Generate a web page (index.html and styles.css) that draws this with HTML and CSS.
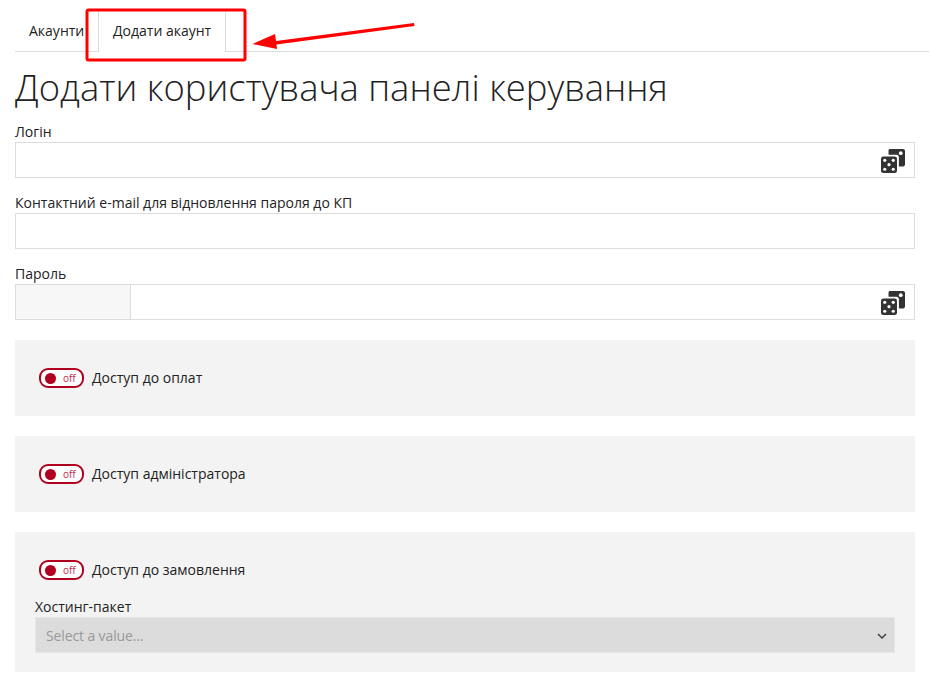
FILE: index.html
```html
<!DOCTYPE html>
<html lang="uk">
<head>
<meta charset="utf-8">
<title>Додати акаунт</title>
<link rel="stylesheet" href="styles.css">
</head>
<body>
<nav class="tabs">
  <a class="tab">Акаунти</a>
  <a class="tab tab-active">Додати акаунт</a>
</nav>
<main class="page">
  <h1 class="title">Додати користувача панелі керування</h1>
  <div class="field">
    <label class="label">Логін</label>
    <div class="input">
      <svg class="dice" viewBox="0 0 25.500 25.500"><use href="#dice"/></svg>
    </div>
  </div>
  <div class="field">
    <label class="label">Контактний e-mail для відновлення пароля до КП</label>
    <div class="input"></div>
  </div>
  <div class="field field-last">
    <label class="label">Пароль</label>
    <div class="input">
      <div class="addon"></div>
      <svg class="dice" viewBox="0 0 25.500 25.500"><use href="#dice"/></svg>
    </div>
  </div>
  <section class="panel">
    <div class="switch-row"><span class="switch"><span class="knob"></span><span class="off">off</span></span><span>Доступ до оплат</span></div>
  </section>
  <section class="panel">
    <div class="switch-row"><span class="switch"><span class="knob"></span><span class="off">off</span></span><span>Доступ адміністратора</span></div>
  </section>
  <section class="panel panel-tall">
    <div class="switch-row"><span class="switch"><span class="knob"></span><span class="off">off</span></span><span>Доступ до замовлення</span></div>
    <label class="label label-sub">Хостинг-пакет</label>
    <div class="select">
      <span class="placeholder">Select a value...</span>
      <svg class="chev" viewBox="0 0 10 6"><path d="M1 1l4 4 4-4" fill="none" stroke="#444" stroke-width="1.5"/></svg>
    </div>
  </section>
</main>
<svg class="annot" viewBox="0 0 929 691">
  <rect x="87" y="10" width="158" height="50" rx="1.5" fill="none" stroke="#f00" stroke-width="3"/>
  <path d="M252.500 44L275 34L276 41L414 23L414.500 26L276.500 44.500L277 49Z" fill="#f00"/>
</svg>
<svg class="defs" width="0" height="0">
  <defs>
    <g id="dice">
      <path fill="#333" d="M8 1.500C8 .7 8.700 0 9.500 0H23.500C24.600 0 25.500 .9 25.500 2V16.500C25.500 17.600 24.600 18.500 23.500 18.500H19V8.500C19 7.100 17.900 6 16.500 6H8Z"/>
      <circle cx="21" cy="4.500" r="2" fill="#fff"/>
      <rect x="0" y="8" width="17" height="17.500" rx="2.500" fill="#333"/>
      <g fill="#fff"><circle cx="4" cy="12" r="1.700"/><circle cx="13" cy="12" r="1.700"/><circle cx="8.500" cy="16.700" r="1.700"/><circle cx="4" cy="21.500" r="1.700"/><circle cx="13" cy="21.500" r="1.700"/></g>
    </g>
  </defs>
</svg>
</body>
</html>
```
FILE: styles.css
```css
* { box-sizing: border-box; }
html, body { margin: 0; padding: 0; }
body {
  width: 929px;
  height: 691px;
  overflow: hidden;
  background: #fff;
  color: #222;
  font-family: "Open Sans", "Liberation Sans", sans-serif;
  font-size: 14px;
  line-height: 20px;
}
.tabs {
  display: flex;
  height: 52px;
  margin-left: 15px;
  padding-top: 10px;
  border-bottom: 1px solid #ddd;
}
.tab {
  display: block;
  padding: 10px 14px;
  height: 42px;
  border: 1px solid transparent;
  border-bottom: 0;
  white-space: nowrap;
}
.tab:first-child { width: 83px; padding-left: 13px; padding-right: 0; }
.tab-active {
  width: 128px;
  background: #fff;
  border-color: #ddd;
}
.page { padding: 0 14px 0 15px; }
.title {
  margin: 15px 0 0;
  font-size: 36.4px;
  font-weight: 300;
  line-height: 40px;
  color: #222;
  white-space: nowrap;
}
.field { margin-bottom: 14px; }
.field:first-of-type { margin-top: 14px; }
.field-last { margin-bottom: 20px; }
.label { display: block; height: 21px; padding-top: 1px; line-height: 20px; white-space: nowrap; }
.input {
  position: relative;
  display: flex;
  align-items: center;
  justify-content: flex-end;
  height: 36px;
  border: 1px solid #ddd;
  padding: 2px 9px 0 0;
}
.addon {
  position: absolute;
  left: 0;
  top: 0;
  bottom: 0;
  width: 115px;
  background: #f7f7f7;
  border-right: 1px solid #ddd;
}
.dice { width: 24px; height: 24px; display: block; }
.panel {
  height: 76px;
  margin-bottom: 20px;
  padding: 28px 20px 0 24px;
  background: #f3f3f3;
}
.panel-tall { height: 140px; padding-left: 20px; }
.panel-tall .switch-row { padding-left: 4px; }
.switch-row { display: flex; align-items: center; gap: 8px; height: 20px; }
.switch {
  display: flex;
  align-items: center;
  width: 45px;
  height: 20px;
  border: 2px solid #b0001e;
  border-radius: 9px;
  background: #fff;
  padding-left: 4px;
}
.knob { width: 11px; height: 11px; border-radius: 50%; background: #b0001e; }
.off { margin-left: 7px; font-size: 10px; line-height: 14px; color: #c0294a; }
.label-sub { margin-top: 17px; height: 20px; padding-top: 0; }
.select {
  display: flex;
  align-items: center;
  justify-content: space-between;
  height: 36px;
  padding: 2px 7px 0 10px;
  background: #dcdcdc;
  border: 1px solid #e6e6e6;
  color: #999;
}
.placeholder { letter-spacing: -0.12px; }
.chev { width: 10px; height: 6px; display: block; }
.annot { position: absolute; left: 0; top: 0; width: 929px; height: 691px; pointer-events: none; }
.defs { position: absolute; }
```
